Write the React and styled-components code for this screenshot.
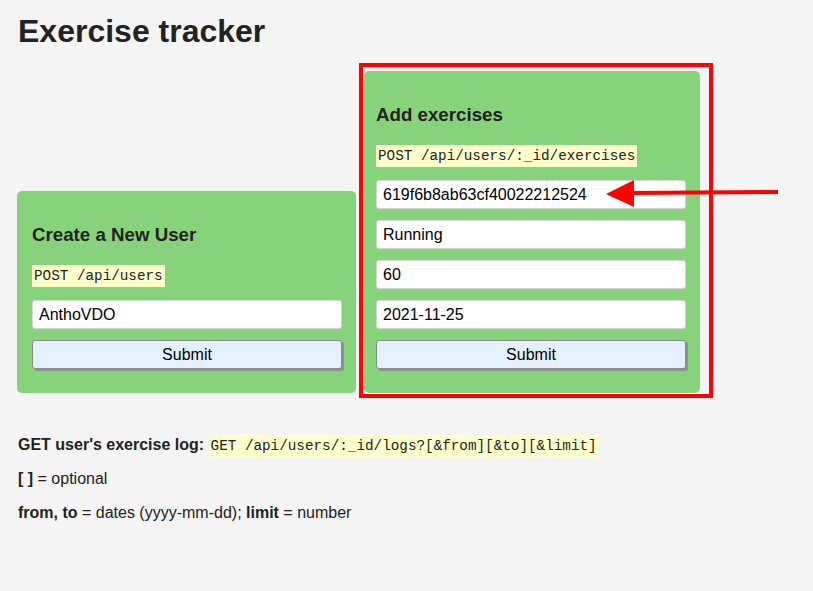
import React from 'react';
import styled, { createGlobalStyle } from 'styled-components';

const GlobalStyle = createGlobalStyle`
  * { box-sizing: border-box; }
  body {
    margin: 0;
    background-color: #f4f4f4;
    color: #222;
    font-family: "Liberation Sans", Arial, sans-serif;
  }
`;

const Page = styled.div`
  position: relative;
  padding: 13px 0 40px 17px;
  min-height: 591px;
`;

const Title = styled.h1`
  margin: 0 0 0 1px;
  font-size: 32px;
  font-weight: bold;
`;

const Forms = styled.div`
  display: flex;
  align-items: flex-end;
  gap: 8px;
  margin-top: 21px;
`;

const Form = styled.form`
  position: relative;
  width: ${p => p.$width}px;
  padding: 33px 14px 24px ${p => p.$padLeft}px;
  background-color: #87d37c;
  border-radius: 5px;
`;

const FormTitle = styled.h3`
  margin: 0;
  font-size: 18.72px;
  font-weight: bold;
`;

const Endpoint = styled.p`
  margin: 18px 0 14px;
  line-height: 22px;
  height: 22px;
`;

const Code = styled.code`
  font-family: "Liberation Mono", "DejaVu Sans Mono", monospace;
  font-size: 14.3px;
  background-color: #ffffcc;
  padding: 3px 2px;
`;

const Fields = styled.div`
  display: flex;
  flex-direction: column;
  gap: 11px;
`;

const Input = styled.input`
  display: block;
  width: 100%;
  height: 29px;
  padding: 0 6px;
  border: 1px solid #d4d4d4;
  border-radius: 3px;
  background: #fff;
  color: #000;
  font-family: "Liberation Sans", Arial, sans-serif;
  font-size: 16px;
  outline: none;
`;

const Button = styled.button`
  display: block;
  width: 100%;
  height: 29px;
  border: 1px solid #8a8a8a;
  border-radius: 3px;
  background-color: #e3f0fd;
  box-shadow: 2px 2px 0 #8f8f8f;
  color: #000;
  font-family: "Liberation Sans", Arial, sans-serif;
  font-size: 16px;
`;

const Highlight = styled.div`
  position: absolute;
  left: -5px;
  top: -8px;
  right: -13px;
  bottom: -5px;
  border: 4px solid #ff0000;
  pointer-events: none;
`;

const Arrow = styled.svg`
  position: absolute;
  left: 600px;
  top: 175px;
`;

const Notes = styled.div`
  margin: 43px 0 0 1px;
  font-size: 16px;

  p {
    margin: 0 0 16px;
  }
`;

const Bold = styled.b`
  font-weight: bold;
`;

export default function App() {
  return (
    <Page>
      <GlobalStyle />
      <Title>Exercise tracker</Title>
      <Forms>
        <Form $width={339} $padLeft={15} onSubmit={e => e.preventDefault()}>
          <FormTitle>Create a New User</FormTitle>
          <Endpoint><Code>POST /api/users</Code></Endpoint>
          <Fields>
            <Input defaultValue="AnthoVDO" />
            <Button type="submit">Submit</Button>
          </Fields>
        </Form>
        <Form $width={336} $padLeft={12} onSubmit={e => e.preventDefault()}>
          <FormTitle>Add exercises</FormTitle>
          <Endpoint><Code>POST /api/users/:_id/exercises</Code></Endpoint>
          <Fields>
            <Input defaultValue="619f6b8ab63cf40022212524" />
            <Input defaultValue="Running" />
            <Input defaultValue="60" />
            <Input defaultValue="2021-11-25" />
            <Button type="submit">Submit</Button>
          </Fields>
          <Highlight />
        </Form>
      </Forms>
      <Notes>
        <p><Bold>GET user's exercise log:</Bold> <Code>GET /api/users/:_id/logs?[&amp;from][&amp;to][&amp;limit]</Code></p>
        <p><Bold>[ ]</Bold> = optional</p>
        <p><Bold>from, to</Bold> = dates (yyyy-mm-dd); <Bold>limit</Bold> = number</p>
      </Notes>
      <Arrow width="185" height="40" viewBox="0 0 185 40">
        <line x1="30" y1="18" x2="178" y2="17" stroke="#ff0000" strokeWidth="4" />
        <polygon points="6,19 34,5 34,32" fill="#ff0000" />
      </Arrow>
    </Page>
  );
}
